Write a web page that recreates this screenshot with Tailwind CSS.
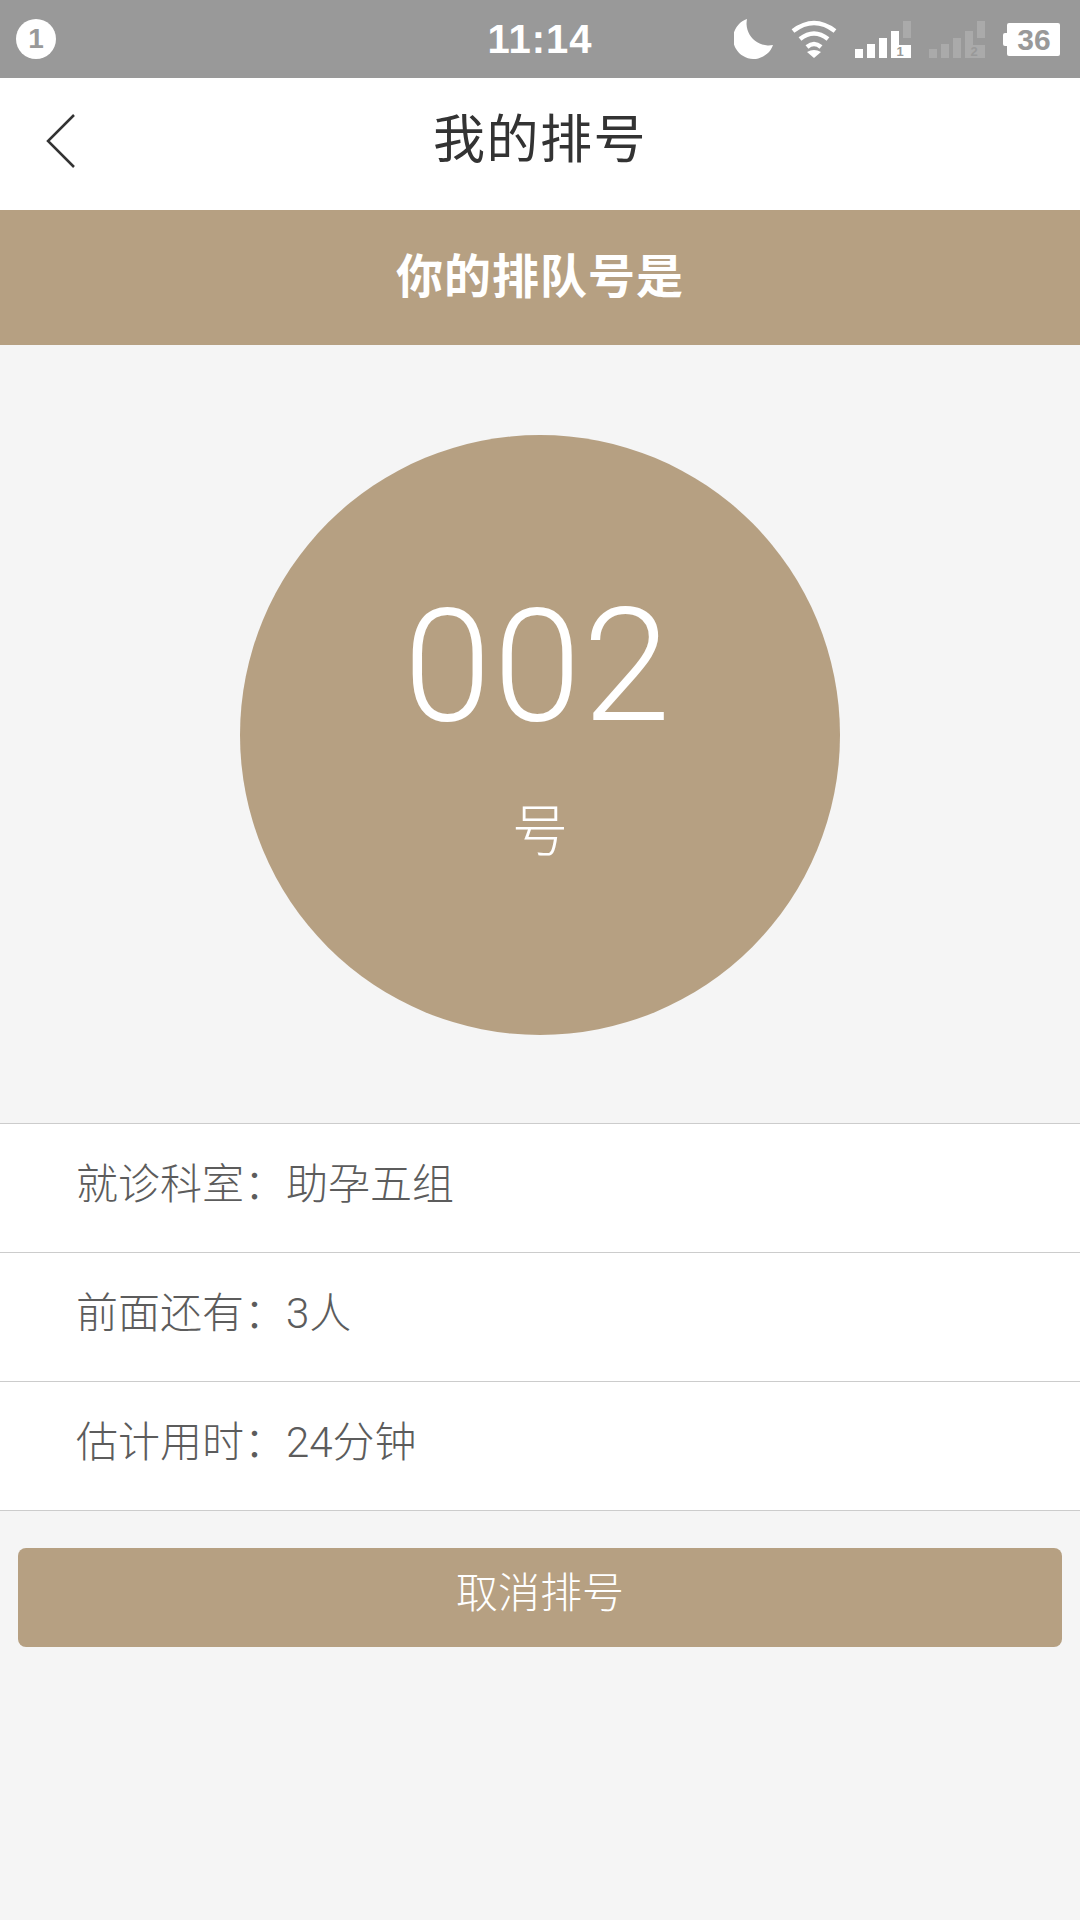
<!DOCTYPE html>
<html lang="zh-CN">
  <head>
    <meta charset="UTF-8" />
    <meta name="viewport" content="width=device-width, initial-scale=1.0" />
    <title>我的排号</title>
    <script src="https://cdn.jsdelivr.net/npm/@tailwindcss/browser@4"></script>
  </head>
  <body class="bg-[#f5f5f5] font-['Liberation_Sans','Noto_Sans_CJK_SC',sans-serif]">
    <div class="w-[1080px] h-[1920px] flex flex-col overflow-hidden">
      <!-- status bar -->
      <div class="h-[78px] shrink-0 bg-[#999999] grid grid-cols-[1fr_auto_1fr] items-center pl-4 pr-5">
        <div class="w-10 h-10 rounded-full bg-white text-[#999999] flex items-center justify-center text-[28px] font-bold leading-none">1</div>
        <div class="ml-1 text-white text-[40px] font-bold leading-none tracking-[1px]">11:14</div>
        <div class="flex items-center justify-end gap-[18px]">
          <svg width="39" height="40" viewBox="0 0 39 40"><path fill="#fff" d="M13 0A20.500 20.500 0 1 0 39 26A22 22 0 0 1 13 0Z" /></svg>
          <svg width="46" height="38" viewBox="0 0 46 38" fill="none" stroke="#fff" stroke-width="4.500">
            <path d="M2 11Q23 -5 44 11" />
            <path d="M9 19Q23 8 37 19" />
            <path d="M16 27Q23 21 30 27" />
            <path fill="#fff" stroke="none" d="M16 32Q23 28 30 32L23 38Z" />
          </svg>
          <svg class="overflow-visible" width="56" height="37" viewBox="0 0 56 37">
            <g fill="#fff">
              <rect x="0" y="28" width="8" height="9" />
              <rect x="12" y="23" width="8" height="14" />
              <rect x="24" y="17" width="8" height="20" />
              <rect x="36" y="10" width="8" height="14" />
              <rect x="36" y="24" width="20" height="13" />
            </g>
            <rect x="48" y="0" width="8" height="17" fill="#aaaaaa" />
            <text x="45" y="35" text-anchor="middle" font-size="13" font-weight="700" fill="#999999">1</text>
          </svg>
          <svg class="overflow-visible" width="56" height="37" viewBox="0 0 56 37">
            <g fill="#aaaaaa">
              <rect x="0" y="28" width="8" height="9" />
              <rect x="12" y="23" width="8" height="14" />
              <rect x="24" y="17" width="8" height="20" />
              <rect x="36" y="10" width="8" height="14" />
              <rect x="36" y="24" width="20" height="13" />
              <rect x="48" y="0" width="8" height="17" />
            </g>
            <text x="45" y="35" text-anchor="middle" font-size="13" font-weight="700" fill="#999999">2</text>
          </svg>
          <svg width="57" height="33" viewBox="0 0 57 33">
            <rect x="0" y="10" width="6" height="13" rx="2" fill="#fff" />
            <rect x="4" y="0" width="53" height="33" rx="2" fill="#fff" />
            <text x="31" y="27" text-anchor="middle" font-size="30" font-weight="700" fill="#999999">36</text>
          </svg>
        </div>
      </div>

      <!-- nav -->
      <div class="h-[132px] shrink-0 bg-white relative flex items-center justify-center pb-[8px]">
        <svg class="absolute left-[46px] top-[36px]" width="30" height="54" viewBox="0 0 30 54" fill="none" stroke="#333333" stroke-width="2.500">
          <path d="M28 1L2 27L28 53" />
        </svg>
        <h1 class="text-[52px] text-[#333333] tracking-[1.500px] leading-none">我的排号</h1>
      </div>

      <!-- banner -->
      <div class="h-[135px] shrink-0 bg-[#b6a082] flex items-center justify-center text-white text-[47px] font-bold tracking-[1px]">你的排队号是</div>

      <!-- circle -->
      <div class="h-[778px] shrink-0 pt-[90px] flex justify-center">
        <div class="w-[600px] h-[600px] rounded-full bg-[#b6a082] flex flex-col items-center text-white">
          <div class="mt-[152px] mr-1 font-['Roboto'] font-light text-[158px] tracking-[2px] leading-none">002</div>
          <div class="mt-[59px] text-[56px] font-light leading-none">号</div>
        </div>
      </div>

      <!-- info rows -->
      <div class="bg-white border-t border-[#cccccc] text-[42px] text-[#5c5c5c] font-['Roboto','Noto_Sans_CJK_SC',sans-serif] font-light shrink-0">
        <div class="h-[129px] border-b border-[#cccccc] flex items-center pl-[76px] pb-2">就诊科室：助孕五组</div>
        <div class="h-[129px] border-b border-[#cccccc] flex items-center pl-[76px] pb-2">前面还有：3人</div>
        <div class="h-[129px] border-b border-[#cccccc] flex items-center pl-[76px] pb-2">估计用时：24分钟</div>
      </div>

      <div class="px-[18px] pt-[37px]">
        <button class="w-full h-[99px] rounded-[8px] bg-[#b6a082] text-white text-[42px] font-light pb-2">取消排号</button>
      </div>
    </div>
  </body>
</html>
